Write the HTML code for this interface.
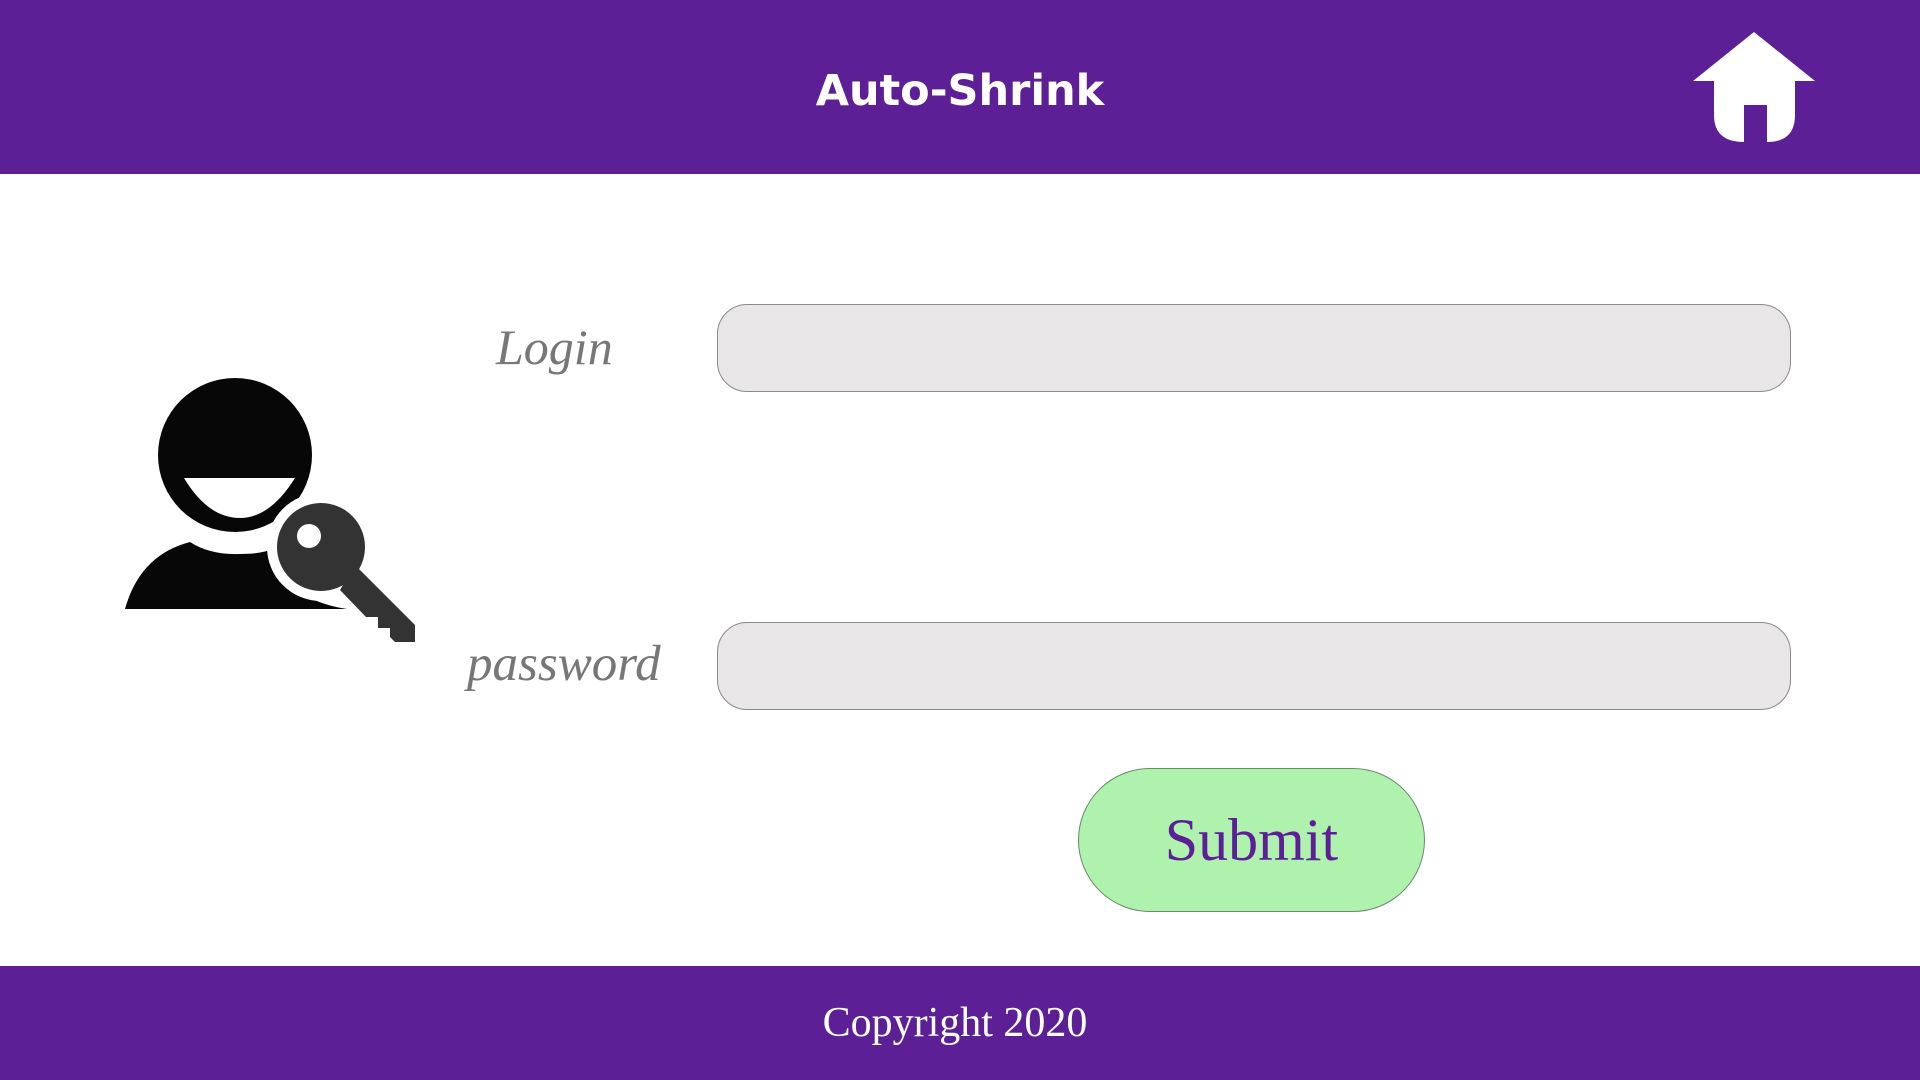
<!DOCTYPE html><html><head><style>
body{margin:0;width:1920px;height:1080px;position:relative;background:#fff;overflow:hidden}
.hdr{position:absolute;left:0;top:0;width:1920px;height:174px;background:#5c1f96}
.ftr{position:absolute;left:0;top:966px;width:1920px;height:114px;background:#5c1f96}
.t{position:absolute;left:0;width:1920px;text-align:center}
.inp{position:absolute;left:717px;width:1074px;height:88px;background:#e8e6e7;border:1px solid #8a8a8a;border-radius:30px;box-sizing:border-box}
.lbl{position:absolute;font-family:"Liberation Serif",serif;font-style:italic;color:#777;font-size:50px}
</style></head><body>
<div class="hdr"></div>
<div class="t" style="top:66px;font-family:'Comic Sans MS','DejaVu Sans',sans-serif;font-size:43px;font-weight:bold;color:#fff">Auto-Shrink</div>
<svg style="position:absolute;left:0;top:0" width="1920" height="174">
<polygon points="1754,32 1693,81 1815,81" fill="#fff"/>
<path d="M1714,81 H1795 V115 Q1795,142 1767,142 V105 H1744 V142 Q1714,142 1714,115 Z" fill="#fff"/>
</svg>
<div class="lbl" style="left:496px;top:318px">Login</div>
<div class="lbl" style="left:467px;top:635px;font-size:51px">password</div>
<div class="inp" style="top:304px"></div>
<div class="inp" style="top:622px"></div>
<div style="position:absolute;left:1078px;top:768px;width:347px;height:144px;background:#aef2ae;border:1px solid #6a8a6a;border-radius:72px;box-sizing:border-box;text-align:center;line-height:142px;font-family:'Liberation Serif',serif;font-size:60px;color:#5c1f96">Submit</div>
<svg style="position:absolute;left:0;top:0" width="500" height="700">
<path d="M125,609 Q140,555 190,542 Q210,555 240,554 Q262,554 272,549 Q285,600 347,609 Z" fill="#070707"/>
<circle cx="235" cy="455" r="77" fill="#070707"/>
<path d="M184,478 H295 Q270,518 240,518 Q208,518 184,478 Z" fill="#fff"/>
<circle cx="321" cy="547" r="54" fill="#fff"/>
<circle cx="321" cy="547" r="44" fill="#333"/>
<path d="M355,565 L415,625 V642 H395 L390,637 V628 H378 V617 H366 L340,590 Z" fill="#333"/>
<circle cx="309" cy="536" r="12" fill="#fff"/>
</svg>
<div class="ftr"></div>
<div class="t" style="top:999px;left:-5px;font-family:'Liberation Serif',serif;font-size:42px;color:#fff">Copyright 2020</div>
</body></html>
